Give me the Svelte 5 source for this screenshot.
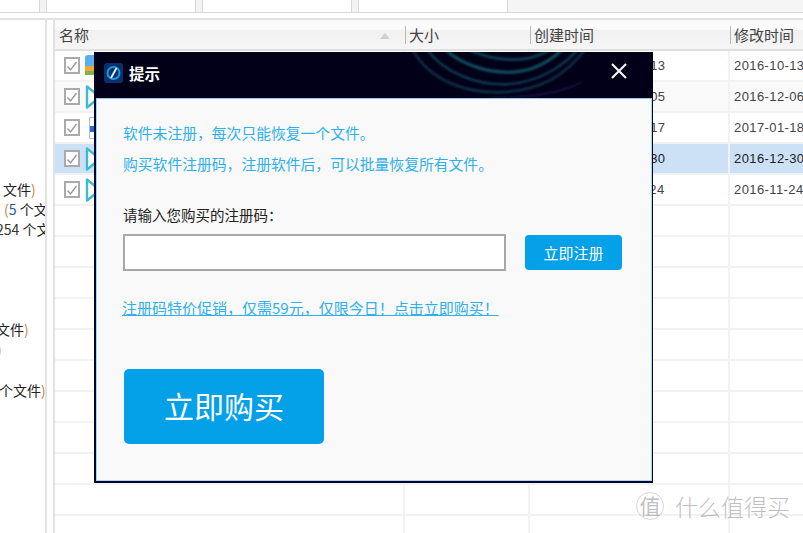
<script>
  const rows = [
    { created: '2016-10-13', modified: '2016-10-13', icon: 'img' },
    { created: '2016-12-05', modified: '2016-12-06', icon: 'play', alt: true },
    { created: '2017-01-17', modified: '2017-01-18', icon: 'doc' },
    { created: '2016-12-30', modified: '2016-12-30', icon: 'play', selected: true },
    { created: '2016-11-24', modified: '2016-11-24', icon: 'play' }
  ];
  const empties = Array.from({ length: 11 });
</script>

<div class="page">
  <div class="tabs">
    <div class="tab t1"></div>
    <div class="tab t2"></div>
    <div class="tab t3"></div>
    <div class="tab t4"></div>
    <div class="tabrest"></div>
  </div>

  <div class="main">
    <aside class="side">
      <div class="ln l1">文件<span class="par">)</span></div>
      <div class="ln l2"><span class="par">(</span><span class="num">5</span> 个文件</div>
      <div class="ln l3"><span class="num2">254</span> 个文件</div>
      <div class="ln l4">文件<span class="par">)</span></div>
      <div class="ln l5"><span class="par">)</span></div>
      <div class="ln l6">个文件<span class="par">)</span></div>
    </aside>

    <section class="table">
      <div class="head">
        <div class="hc c1">名称<span class="sort"></span></div>
        <div class="hc c2">大小</div>
        <div class="hc c3">创建时间</div>
        <div class="hc c4">修改时间</div>
      </div>
      {#each rows as r}
        <div class="row" class:alt={r.alt} class:selected={r.selected}>
          <div class="cell c1">
            <span class="check">
              <svg width="12" height="12" viewBox="0 0 12 12"><path d="M1.5 6.5 L4.5 10 L10.5 2" fill="none" stroke="#999" stroke-width="1.4"/></svg>
            </span>
            {#if r.icon === 'img'}
              <svg class="ficon" width="16" height="26" viewBox="0 0 16 26">
                <rect x="0" y="2" width="16" height="14" rx="3" fill="#5aaef0"/>
                <rect x="0" y="13" width="16" height="5" fill="#f2a531"/>
                <rect x="0" y="18" width="16" height="4" fill="#79b54a"/>
              </svg>
            {:else if r.icon === 'play'}
              <svg class="ficon" width="16" height="26" viewBox="0 0 16 26">
                <path d="M2 2.5 L2 23.5 L15 13 Z" fill="#fff" stroke="#3fbccb" stroke-width="2.4" stroke-linejoin="round"/>
              </svg>
            {:else}
              <svg class="ficon" width="16" height="26" viewBox="0 0 16 26">
                <rect x="4.5" y="2.5" width="10" height="21" fill="#fff" stroke="#bbb"/>
                <rect x="5" y="11" width="5" height="6" fill="#1f6fd0"/>
              </svg>
            {/if}
          </div>
          <div class="cell c2"></div>
          <div class="cell c3">{r.created}</div>
          <div class="cell c4">{r.modified}</div>
        </div>
      {/each}
      {#each empties as _}
        <div class="row">
          <div class="cell c1"></div>
          <div class="cell c2"></div>
          <div class="cell c3"></div>
          <div class="cell c4"></div>
        </div>
      {/each}
    </section>
  </div>

  <div class="dialog">
    <header class="title">
      <svg class="swirl" width="559" height="46" viewBox="0 0 559 46">
        <defs>
          <filter id="soft" x="-10%" y="-10%" width="120%" height="120%"><feGaussianBlur stdDeviation="1"/></filter>
        </defs>
        <g fill="none" filter="url(#soft)">
          <path d="M318 -4 C335 30 375 42 410 40 C450 38 475 20 492 -4" stroke="#0b2a40" stroke-width="3"/>
          <path d="M332 -4 C350 22 385 34 415 32 C445 30 470 14 485 -4" stroke="#0e3a50" stroke-width="2.5"/>
          <path d="M350 -4 C365 12 395 22 420 20 C440 19 458 8 470 -4" stroke="#12505f" stroke-width="3"/>
          <path d="M372 -4 C390 6 415 10 435 6 C445 4 452 0 458 -4" stroke="#0e3c50" stroke-width="3"/>
          <path d="M395 46 C430 46 465 42 488 30" stroke="#1a1448" stroke-width="1.5"/>
        </g>
      </svg>
      <svg class="logo" width="19" height="20" viewBox="0 0 19 20">
        <rect width="19" height="20" rx="3" fill="#08306a"/>
        <circle cx="9.5" cy="10" r="6" fill="none" stroke="#1f93e0" stroke-width="2"/>
        <path d="M7 15 L12.5 5" stroke="#e4f5ff" stroke-width="1.8"/>
      </svg>
      <span class="ttext">提示</span>
      <svg class="close" width="18" height="18" viewBox="0 0 18 18">
        <path d="M2 2 L16 16 M16 2 L2 16" stroke="#f2f2f2" stroke-width="2.2"/>
      </svg>
    </header>
    <div class="body">
      <p class="info first">软件未注册，每次只能恢复一个文件。</p>
      <p class="info second">购买软件注册码，注册软件后，可以批量恢复所有文件。</p>
      <label class="lab" for="code">请输入您购买的注册码：</label>
      <div class="reg">
        <input id="code" class="input" type="text" />
        <button class="small">立即注册</button>
      </div>
      <span class="link">注册码特价促销，仅需59元，仅限今日！点击立即购买！</span>
      <button class="big">立即购买</button>
    </div>
  </div>

  <div class="mark">
    <span class="seal">值</span>
    <span class="wtext">什么值得买</span>
  </div>
</div>

<style>
  :global(body) { margin: 0; background: #fff; }
  .page {
    position: relative;
    width: 803px;
    height: 533px;
    overflow: hidden;
    background: #fff;
    font-family: "Noto Sans CJK SC", "Liberation Sans", sans-serif;
  }
  .tabs {
    display: flex;
    height: 12px;
    border-bottom: 1px solid #d8d8d8;
    background: #f3f3f3;
  }
  .tab { background: #fff; border-right: 1px solid #d8d8d8; }
  .t1 { width: 39px; }
  .t2 { width: 148px; margin-left: 6px; border-left: 1px solid #d8d8d8; }
  .t3 { width: 148px; margin-left: 6px; border-left: 1px solid #d8d8d8; }
  .t4 { width: 148px; margin-left: 6px; border-left: 1px solid #d8d8d8; }
  .tabrest { flex: 1; background: #f5f5f5; }

  .main {
    display: flex;
    margin-top: 5px;
    height: 515px;
    border-top: 2px solid #e2e2e2;
  }
  .side {
    width: 47px;
    border-right: 2px solid #e2e2e2;
    overflow: hidden;
    flex: none;
    font-size: 14px;
    line-height: 20px;
    color: #222;
    padding-top: 159px;
    box-sizing: border-box;
  }
  .ln { white-space: nowrap; height: 20px; }
  .l1 { margin-left: 3px; }
  .l2 { margin-left: 4px; }
  .l3 { margin-left: -4px; }
  .l4 { margin-left: -4px; margin-top: 80px; }
  .l5 { margin-left: -3px; }
  .l6 { margin-left: -1px; margin-top: 21px; }
  .par { color: #c8843a; }
  .num { color: #2a5a9a; }
  .num2 { color: #333; }

  .table {
    margin-left: 6px;
    flex: 1;
    border-left: 2px solid #e2e2e2;
    min-width: 0;
  }
  .head {
    display: flex;
    height: 31px;
    box-sizing: border-box;
    background: linear-gradient(#fbfbfb 0 35%, #f1f1f1 35%, #f5f5f5 100%);
    border-bottom: 2px solid #e0e0e0;
  }
  .hc {
    box-sizing: border-box;
    font-size: 15px;
    line-height: 30px;
    padding-left: 4px;
    color: #444;
    position: relative;
  }
  .hc.c2, .hc.c3, .hc.c4 {
    background: linear-gradient(#b8b8b8, #b8b8b8) no-repeat -1px 6px / 2px 18px;
  }
  .c1 { width: 350px; }
  .c2 { width: 125px; }
  .c3 { width: 200px; }
  .c4 { flex: 1; }
  .sort {
    position: absolute;
    left: 325px;
    top: 13px;
    border: 5px solid transparent;
    border-top: 0;
    border-bottom: 6px solid #cfcfcf;
  }
  .row {
    display: flex;
    height: 31px;
    box-sizing: border-box;
    border-bottom: 2px solid #f2f2f2;
  }
  .row.alt { background: #f9f9f9; }
  .row.selected { background: #cce0f6; }
  .cell {
    box-sizing: border-box;
    border-right: 2px solid #f2f2f2;
    font-size: 13px;
    line-height: 29px;
    color: #444;
    padding-left: 4px;
    white-space: nowrap;
    overflow: hidden;
    letter-spacing: 0.4px;
    font-family: "Liberation Sans", sans-serif;
  }
  .cell.c3 { padding-left: 65px; }
  .cell.c4 { border-right: 0; }
  .selected .cell { color: #222; }
  .cell.c1 {
    display: flex;
    align-items: center;
    padding-left: 9px;
    gap: 5px;
    overflow: visible;
  }
  .check {
    width: 16px;
    height: 17px;
    box-sizing: border-box;
    border: 2px solid #aaa;
    background: #fff;
    display: flex;
    align-items: center;
    justify-content: center;
    flex: none;
  }
  .ficon { flex: none; }

  .dialog {
    position: absolute;
    left: 94px;
    top: 52px;
    width: 559px;
    height: 431px;
    box-sizing: border-box;
    border: 1px solid #00062e;
    border-left-width: 2px;
    border-bottom-width: 2px;
    border-top: 0;
    display: flex;
    flex-direction: column;
    background: #f9f9f9;
  }
  .title {
    height: 46px;
    flex: none;
    margin: 0 -1px 0 -2px;
    background: #020018;
    display: flex;
    align-items: center;
    padding-left: 10px;
    padding-bottom: 4px;
    box-sizing: border-box;
    position: relative;
    overflow: hidden;
  }
  .swirl { position: absolute; left: 0; top: 0; }
  .logo { position: relative; }
  .ttext {
    position: relative;
    color: #fff;
    font-size: 15.5px;
    font-weight: 700;
    margin-left: 6px;
  }
  .close { position: absolute; left: 516px; top: 10px; }
  .body {
    flex: 1;
    border: 1px solid #a9d5ee;
    border-top-color: #8ccbee;
    display: flex;
    flex-direction: column;
    align-items: flex-start;
    padding-left: 26px;
    min-height: 0;
    overflow: hidden;
  }
  .info {
    margin: 0;
    color: #2fb0ea;
    font-size: 14.8px;
    line-height: 20px;
    white-space: nowrap;
  }
  .first { margin-top: 24px; }
  .second { margin-top: 11px; }
  .lab {
    margin-top: 31px;
    font-size: 14.5px;
    line-height: 20px;
    color: #222;
  }
  .reg {
    display: flex;
    align-items: center;
    margin-top: 9px;
  }
  .input {
    width: 383px;
    height: 37px;
    box-sizing: border-box;
    border: 2px solid #a8a8a8;
    background: #fff;
    padding: 0;
    outline: 0;
  }
  .small {
    width: 97px;
    height: 35px;
    margin-left: 19px;
    border: 0;
    border-radius: 4px;
    background: #04a0e8;
    color: #fff;
    font: 15px "Noto Sans CJK SC", sans-serif;
    padding: 0;
  }
  .link {
    margin-top: 27px;
    margin-left: -1px;
    color: #2fb0ea;
    font-size: 15px;
    line-height: 20px;
    text-decoration: underline;
    white-space: nowrap;
  }
  .big {
    margin-top: 51px;
    margin-left: 1px;
    width: 200px;
    height: 75px;
    border: 0;
    border-radius: 5px;
    background: #04a0e8;
    color: #fff;
    font: 30px "Noto Sans CJK SC", sans-serif;
    padding: 0 0 4px;
    flex: none;
  }
  .mark {
    position: absolute;
    left: 636px;
    top: 492px;
    display: flex;
    align-items: center;
    color: rgba(170, 170, 170, 0.75);
  }
  .seal {
    width: 28px;
    height: 28px;
    box-sizing: border-box;
    border: 1px solid rgba(190, 190, 190, 0.6);
    border-radius: 50%;
    font-size: 21px;
    line-height: 24px;
    text-align: center;
  }
  .wtext {
    margin-left: 11px;
    font-size: 23px;
    line-height: 28px;
    font-weight: 300;
  }
</style>
